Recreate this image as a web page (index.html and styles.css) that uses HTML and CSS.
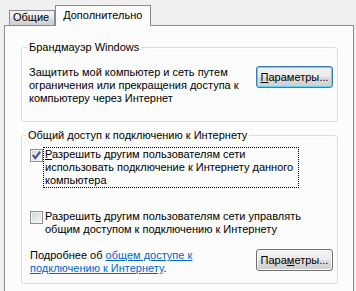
FILE: index.html
```html
<!DOCTYPE html>
<html lang="ru">
<head>
  <meta charset="UTF-8" />
  <title>Свойства подключения</title>
  <link rel="stylesheet" href="styles.css">
</head>
<body>
  <div class="dialog">
    <div class="tabs">
      <div class="tab">Общие</div>
      <div class="tab active">Дополнительно</div>
    </div>

    <div class="panel">
      <fieldset class="group firewall">
        <legend>Брандмауэр Windows</legend>
        <div class="row">
          <p class="desc">Защитить мой компьютер и сеть путем<br>ограничения или прекращения доступа к<br>компьютеру через Интернет</p>
          <button type="button" class="btn default"><u>П</u>араметры...</button>
        </div>
      </fieldset>

      <fieldset class="group sharing">
        <legend>Общий доступ к подключению к Интернету</legend>

        <label class="option first">
          <span class="check">
            <svg width="11" height="11" viewBox="0 0 11 11"><path d="M1.8 5 L4.3 8.2 L9.2 1.6" fill="none" stroke="#41508a" stroke-width="2"/></svg>
          </span>
          <span class="option-text focused"><u>Р</u>азрешить другим пользователям сети<br>использовать подключение к Интернету данного<br>компьютера</span>
        </label>

        <label class="option second">
          <span class="check"></span>
          <span class="option-text">Разрешит<u>ь</u> другим пользователям сети управлять<br>общим доступом к подключению к Интернету</span>
        </label>

        <div class="row more">
          <p class="more-text">Подробнее об <a href="#">общем доступе к<br>подключению к Интернету</a>.</p>
          <button type="button" class="btn">Пара<u>м</u>етры...</button>
        </div>
      </fieldset>
    </div>
  </div>
</body>
</html>
```

FILE: styles.css
```css
* {
  box-sizing: border-box;
  margin: 0;
  padding: 0;
}

body {
  background-color: #f0f0f0;
  font: 11px/13px "Liberation Sans", Arial, sans-serif;
  color: #000;
  overflow: hidden;
}

.dialog {
  padding: 5px 0 0 4px;
}

/* tabs */
.tabs {
  display: flex;
  align-items: flex-end;
  height: 20px;
  padding-left: 5px;
}

.tab {
  height: 15px;
  padding: 0 5px 0 3px;
  border: 1px solid #898c95;
  border-bottom: 0;
  background: linear-gradient(#f3f3f3, #ebebeb 50%, #dddddd 50%, #cfcfcf);
}

.tab.active {
  position: relative;
  z-index: 1;
  height: 21px;
  margin-bottom: -1px;
  padding: 3px 8px 0 7px;
  background: #fcfcfc;
}

.panel {
  width: 350px;
  height: 266px;
  padding: 0 15px 0 16px;
  border: 1px solid #898c95;
  border-bottom: 0;
  background-color: #fcfcfc;
}

/* group boxes */
.group {
  min-width: 0;
  border: 1px solid #d5dfe5;
  border-radius: 3px;
  box-shadow: inset 1px 1px 0 #fff;
}

.group legend {
  padding: 0 2px;
  line-height: 13px;
}

.firewall {
  margin-top: 15px;
  padding: 12px 4px 16px 7px;
}

.firewall legend {
  margin-left: -2px;
}

.sharing {
  margin-top: 7px;
  padding: 5px 4px 8px 8px;
}

.sharing legend {
  margin-left: -4px;
}

.row {
  display: flex;
  justify-content: space-between;
  align-items: flex-start;
}

/* buttons */
.btn {
  width: 77px;
  height: 22px;
  border: 1px solid #707070;
  border-radius: 3px;
  background: linear-gradient(#f2f2f2, #ebebeb 50%, #dddddd 50%, #cfcfcf);
  box-shadow: inset 0 0 0 1px #fbfbfb;
  font: inherit;
  color: #000;
  text-align: center;
}

.btn.default {
  border-color: #3c7fb1;
  box-shadow: inset 0 0 0 1px #5fd4f7;
}

/* checkboxes */
.option {
  display: flex;
  align-items: flex-start;
}

.option.second {
  margin-top: 21px;
}

.check {
  display: flex;
  align-items: center;
  justify-content: center;
  flex: none;
  width: 13px;
  height: 13px;
  margin-top: 2px;
  border: 1px solid #8f8f8f;
  background: linear-gradient(135deg, #d3d5d8, #f6f6f6);
  box-shadow: inset 0 0 0 1px #f4f4f4;
}

.option-text {
  padding: 0 1px;
  border: 1px solid transparent;
}

.option-text.focused {
  border: 1px dotted #000;
  width: 256px;
}

/* more info */
.more {
  margin-top: 12px;
}

.more-text a {
  color: #0066cc;
}
```
